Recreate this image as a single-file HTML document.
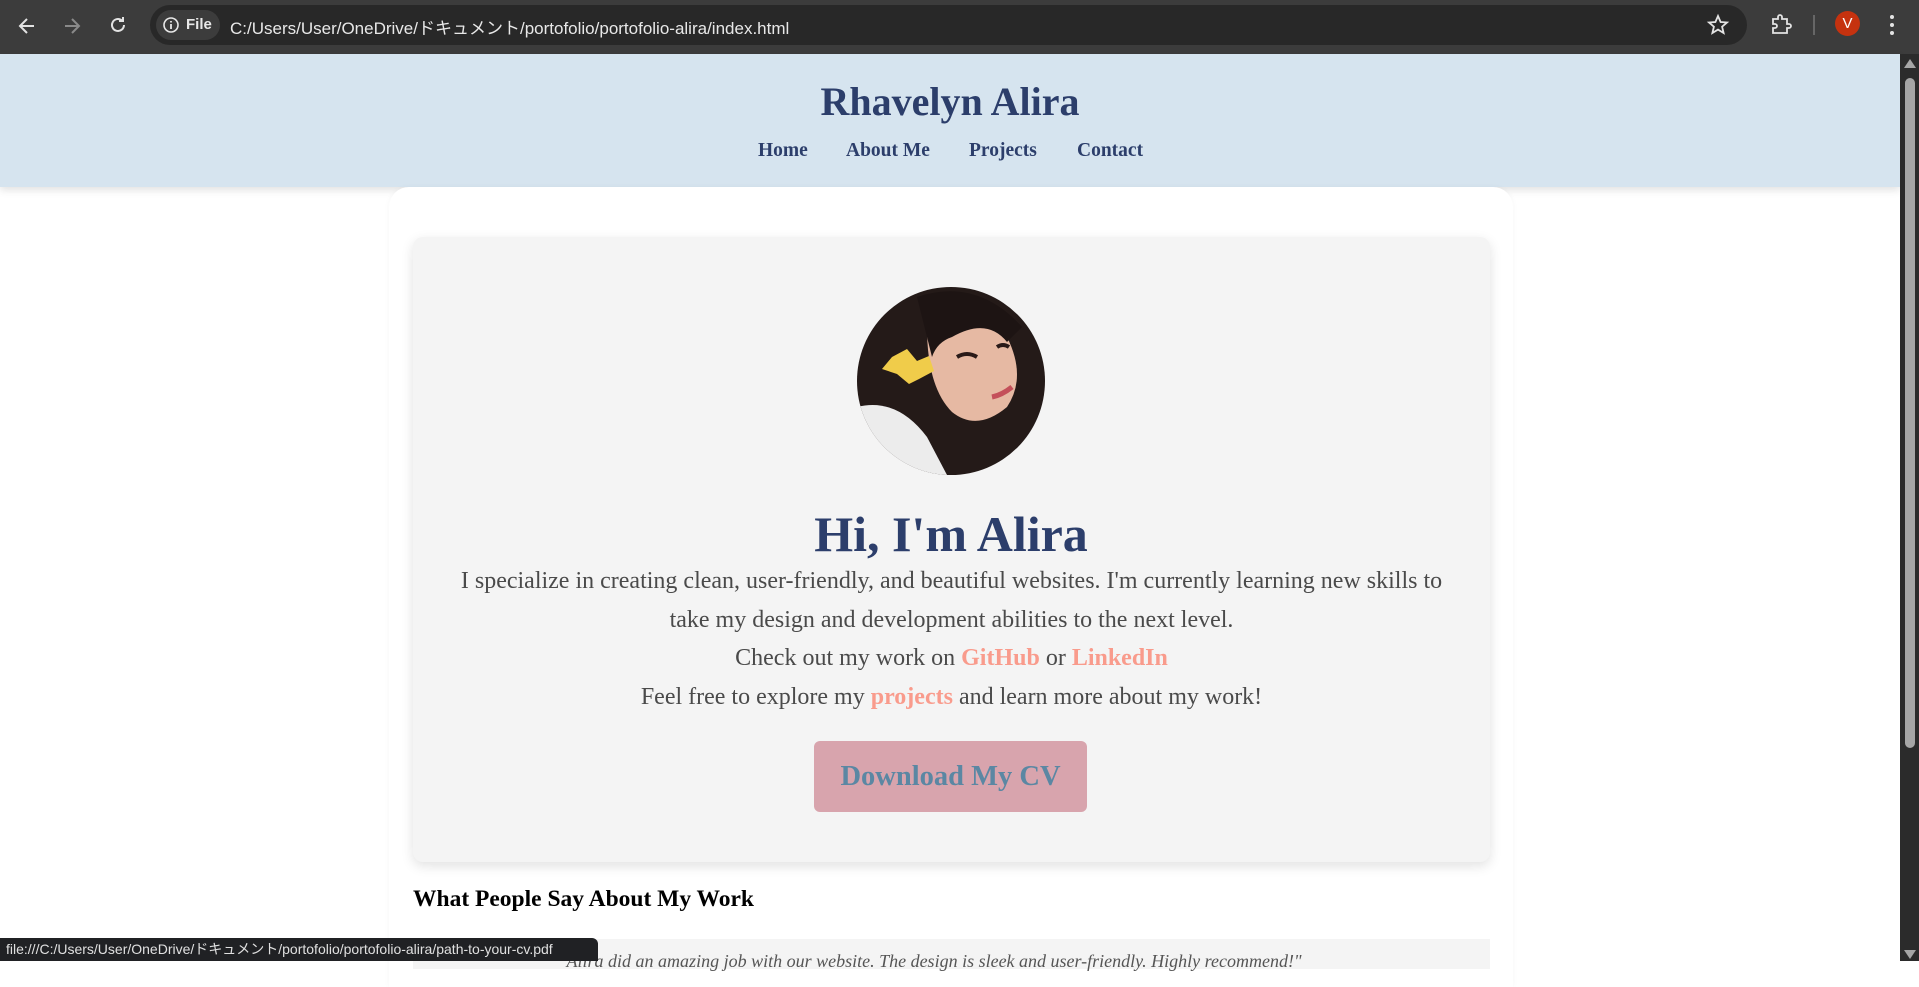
<!DOCTYPE html>
<html><head><meta charset="utf-8"><style>
*{margin:0;padding:0;box-sizing:border-box}
body{width:1919px;height:961px;overflow:hidden;background:#fff;font-family:"Liberation Serif",serif;position:relative}
.chrome{position:absolute;left:0;top:0;width:1919px;height:54px;background:#3c3c3c}
.url{position:absolute;left:150px;top:5px;width:1597px;height:40px;border-radius:20px;background:#282828}
.chip{position:absolute;left:156px;top:10px;width:64px;height:30px;border-radius:15px;background:#3c3c3c;color:#e8e8e8;font:bold 15px "Liberation Sans",sans-serif;line-height:30px;padding-left:30px}
.urltext{position:absolute;left:230px;top:14px;color:#e8e8e8;font:17px "Liberation Sans","Noto Sans CJK JP",sans-serif}
.header{position:absolute;left:0;top:54px;width:1900px;height:133px;background:#d6e4ef;box-shadow:0 3px 8px rgba(0,0,0,.12);text-align:center}
.header h1{position:absolute;width:100%;top:24px;font-size:40px;color:#2c3e6b;font-weight:bold}
.nav a{position:absolute;top:86px;font-size:19.5px;font-weight:bold;color:#2c3e6b;text-decoration:none}
.main{position:absolute;left:389px;top:187px;width:1124px;height:800px;background:#fff;border-radius:20px 20px 0 0;box-shadow:0 0 6px rgba(0,0,0,.04)}
.hero{position:absolute;left:413px;top:237px;width:1077px;height:625px;background:#f4f4f4;border-radius:10px;box-shadow:0 4px 12px rgba(0,0,0,.12)}
.hi{position:absolute;left:0;width:1902px;top:505px;text-align:center;font-size:50px;font-weight:bold;color:#2c3e6b}
.p{position:absolute;left:413px;width:1077px;text-align:center;font-size:24px;color:#4a4a4a}
.p b{color:#f99b8c}
.btn{position:absolute;left:814px;top:741px;width:273px;height:71px;background:#d8a4ad;border-radius:6px;color:#5b87a3;font-size:28.5px;font-weight:bold;text-align:center;line-height:71px}
.wp{position:absolute;left:413px;top:886px;font-size:23.5px;font-weight:bold;color:#000}
.test{position:absolute;left:413px;top:939px;width:1077px;height:30px;background:#f4f4f4}
.test i{position:absolute;left:146px;top:12px;font-size:18px;color:#555;white-space:nowrap}
.status{position:absolute;left:0;top:938px;width:598px;height:23px;background:#202124;border-radius:0 6px 0 0;color:#e0e0e0;font:14px "Liberation Sans","Noto Sans CJK JP",sans-serif;line-height:23px;padding-left:6px}
.sb{position:absolute;left:1900px;top:54px;width:19px;height:907px;background:#2b2b2b}
.thumb{position:absolute;left:1905px;top:78px;width:10px;height:670px;background:#a6a6a6;border-radius:5px}
</style></head><body>
<div class="chrome">
<svg style="position:absolute;left:16px;top:15px" width="22" height="22" viewBox="0 0 22 22"><path d="M18 11H5M11 4l-7 7 7 7" stroke="#e3e3e3" stroke-width="2" fill="none"/></svg>
<svg style="position:absolute;left:61px;top:15px" width="22" height="22" viewBox="0 0 22 22"><path d="M4 11h13M11 4l7 7-7 7" stroke="#8a8a8a" stroke-width="2" fill="none"/></svg>
<svg style="position:absolute;left:107px;top:14px" width="22" height="22" viewBox="0 0 22 22"><path d="M17 11a6 6 0 1 1-2-4.5M16 3v4h-4" stroke="#e3e3e3" stroke-width="2" fill="none"/></svg>
<div class="url"></div>
<div class="chip">File</div>
<svg style="position:absolute;left:162px;top:16px" width="18" height="18" viewBox="0 0 18 18"><circle cx="9" cy="9" r="7" stroke="#e8e8e8" stroke-width="1.6" fill="none"/><path d="M9 8v5M9 5v1.5" stroke="#e8e8e8" stroke-width="1.8"/></svg>
<div class="urltext">C:/Users/User/OneDrive/ドキュメント/portofolio/portofolio-alira/index.html</div>
<svg style="position:absolute;left:1706px;top:13px" width="24" height="24" viewBox="0 0 24 24"><path d="M12 3l2.6 6 6.4.5-4.9 4.2 1.5 6.3L12 16.6 6.4 20l1.5-6.3L3 9.5 9.4 9z" stroke="#e3e3e3" stroke-width="1.8" fill="none"/></svg>
<svg style="position:absolute;left:1768px;top:12px" width="26" height="26" viewBox="0 0 26 26"><path d="M5 7h5V5a2 2 0 0 1 4 0v2h5v5h2a2 2 0 0 1 0 4h-2v5H5v-5h2a2 2 0 0 0 0-4H5z" stroke="#e3e3e3" stroke-width="1.8" fill="none"/></svg>
<div style="position:absolute;left:1813px;top:15px;width:2px;height:20px;background:#666"></div>
<div style="position:absolute;left:1835px;top:11px;width:25px;height:25px;border-radius:50%;background:#c5320f;color:#fff;font:15px 'Liberation Sans',sans-serif;text-align:center;line-height:25px">V</div>
<svg style="position:absolute;left:1888px;top:13px" width="8" height="24"><circle cx="4" cy="4" r="2" fill="#e3e3e3"/><circle cx="4" cy="12" r="2" fill="#e3e3e3"/><circle cx="4" cy="20" r="2" fill="#e3e3e3"/></svg>
</div>
<div class="header"><h1>Rhavelyn Alira</h1>
<div class="nav"><a style="left:758px">Home</a><a style="left:846px">About Me</a><a style="left:969px">Projects</a><a style="left:1077px">Contact</a></div></div>
<div class="main"></div>
<div class="hero"></div>
<svg style="position:absolute;left:857px;top:287px" width="188" height="188" viewBox="0 0 188 188">
<defs><clipPath id="c"><circle cx="94" cy="94" r="94"/></clipPath></defs>
<g clip-path="url(#c)">
<rect width="188" height="188" fill="#241a18"/>
<path d="M0 120 Q40 110 70 150 L90 188 H0Z" fill="#ececec"/>
<path d="M170 150 Q180 170 188 188 H150Z" fill="#e0e0e0"/>
<path d="M70 40 Q110 20 150 50 Q170 90 150 120 Q120 145 95 125 Q70 100 70 40Z" fill="#e6b9a3"/>
<path d="M60 10 Q120 -10 165 40 L150 55 Q130 30 95 50 Q80 55 75 70Z" fill="#1d1413"/>
<path d="M100 70 q10-6 20 0" stroke="#2a1a18" stroke-width="4" fill="none"/>
<path d="M140 60 q6-4 12 0" stroke="#2a1a18" stroke-width="4" fill="none"/>
<path d="M135 110 q10-2 20-10" stroke="#c4505a" stroke-width="5" fill="none"/>
<path d="M35 70 l15 -8 l10 12 l12 -5 l5 15 l-15 8 l-10 5 l-12 -10 l-15 -5z" fill="#f0cc4a"/>
</g></svg>
<div class="hi">Hi, I'm Alira</div>
<div class="p" style="top:562px;line-height:38.5px">I specialize in creating clean, user-friendly, and beautiful websites. I'm currently learning new skills to<br>take my design and development abilities to the next level.<br>Check out my work on <b>GitHub</b> or <b>LinkedIn</b><br>Feel free to explore my <b>projects</b> and learn more about my work!</div>
<div class="btn">Download My CV</div>
<div class="wp">What People Say About My Work</div>
<div class="test"><i>"Alira did an amazing job with our website. The design is sleek and user-friendly. Highly recommend!"</i></div>
<div class="status">file:///C:/Users/User/OneDrive/ドキュメント/portofolio/portofolio-alira/path-to-your-cv.pdf</div>
<div class="sb"></div><div class="thumb"></div>
<svg style="position:absolute;left:1904px;top:59px" width="12" height="9"><path d="M6 0l6 9H0z" fill="#a6a6a6"/></svg>
<svg style="position:absolute;left:1904px;top:950px" width="12" height="9"><path d="M0 0h12L6 9z" fill="#a6a6a6"/></svg>
</body></html>
